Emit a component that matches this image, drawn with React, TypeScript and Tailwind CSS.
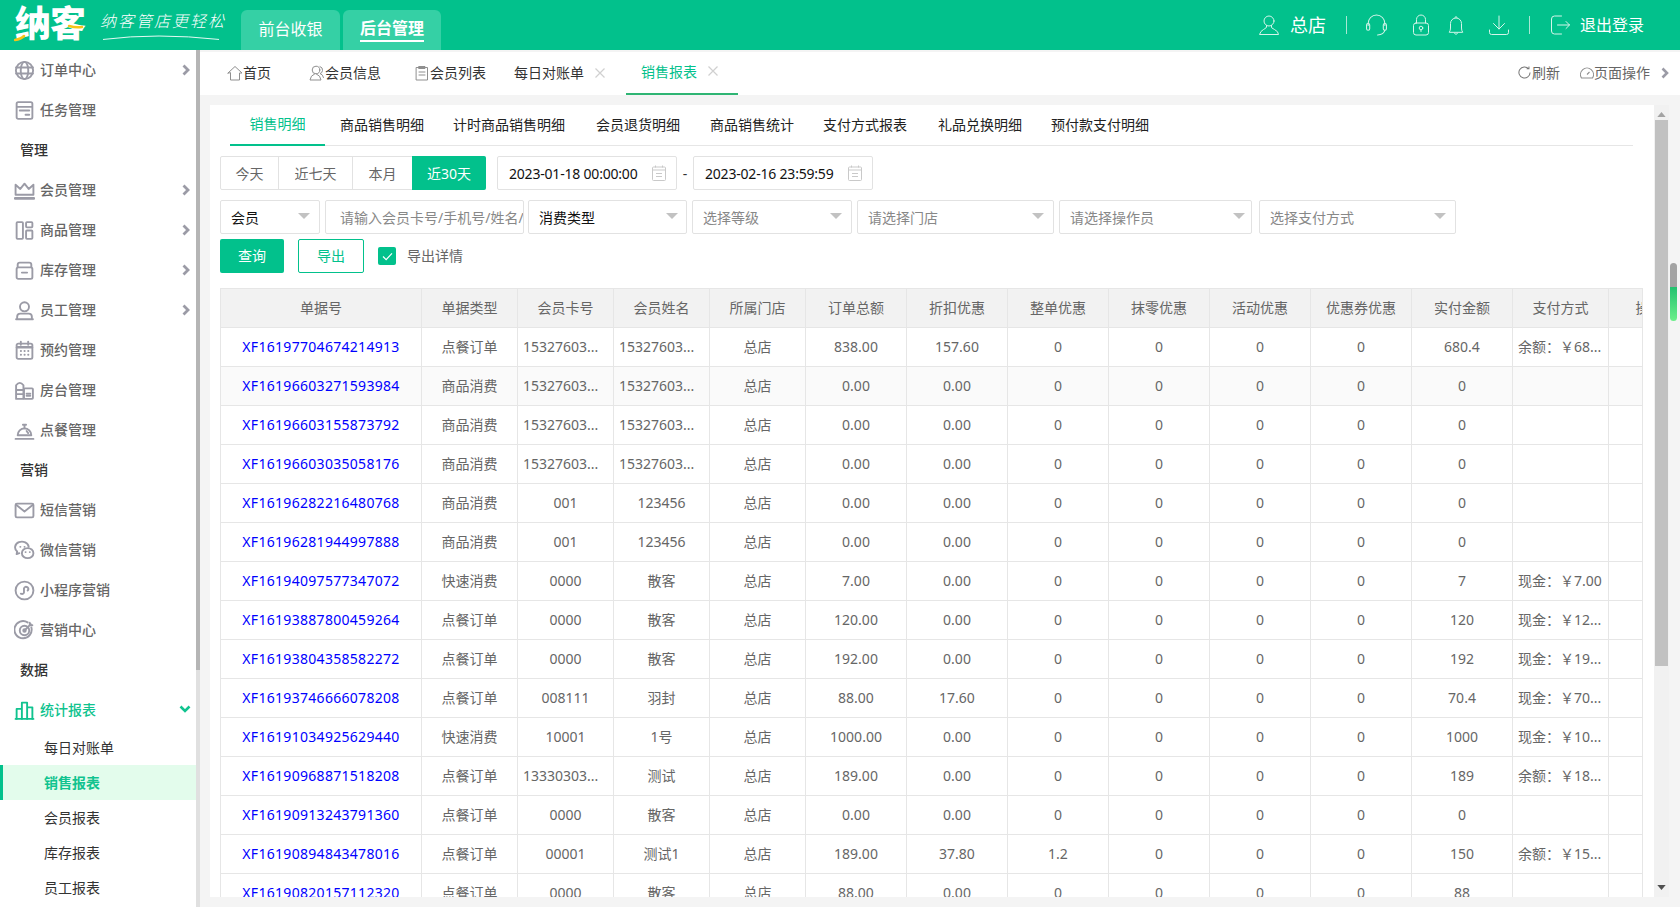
import React from "react";

type IconProps = { children: React.ReactNode; className?: string; box?: string };
const Svg = ({ children, className = "w-5 h-5", box = "0 0 20 20" }: IconProps) => (
  <svg viewBox={box} fill="none" stroke="currentColor" strokeWidth={1.8} strokeLinecap="round" strokeLinejoin="round" className={className}>
    {children}
  </svg>
);

const menuIcons: Record<string, React.ReactNode> = {
  globe: (<><circle cx="10" cy="10" r="8.200" /><ellipse cx="10" cy="10" rx="3.600" ry="8.200" /><path d="M2 7.200h16M2 12.800h16" /></>),
  task: (<><rect x="2.500" y="2" width="15" height="16" rx="1.500" /><path d="M3 6.500h14M5.500 10h9M11 14h3.500" /></>),
  crown: (<><path d="M1.500 14V4.500l4.500 4 4-5 4 5 4.500-4V14z" /><path d="M1 17.500h18" strokeWidth={2.400} /></>),
  goods: (<><rect x="2.500" y="2" width="6" height="16" rx=".8" /><rect x="11.500" y="2" width="6" height="5" rx=".8" /><rect x="11.500" y="10" width="6" height="8" rx=".8" /></>),
  stock: (<><path d="M3.500 7V4.500Q3.500 2.500 5.500 2.500h9Q16.500 2.500 16.500 4.500V7" /><rect x="2.500" y="7" width="15" height="11" rx="1.500" /><path d="M7.500 12h5" /></>),
  staff: (<><circle cx="10" cy="6.500" r="4.300" /><path d="M3 17.500v-1.500q0-3 3-3h8q3 0 3 3v1.500" /><path d="M2 18.300h16" /></>),
  cal: (<><rect x="2.500" y="3.500" width="15" height="14.500" rx="1.500" /><path d="M3 7h14" strokeWidth={2.400} /><path d="M6.500 1.500v3M13.500 1.500v3M6.500 10.500h.2M10 10.500h.2M13.500 10.500h.2M6.500 14h.2M10 14h.2M13.500 14h.2" /></>),
  room: (<><path d="M2 18V5q3.500-4.500 7 0v13z" /><path d="M2.500 9.500h6.500M2.500 13.500h6.500" /><rect x="9.500" y="8" width="8.500" height="10" rx=".8" /><path d="M12 13h3.500M12 15h3.500" /></>),
  bell: (<><path d="M3.500 14.500a6.500 6.500 0 0 1 13 0z" /><path d="M10 8V5.500M8.500 4.500 11.500 4.500M12 10.500l1.500 2M1.500 18h17" /></>),
  mail: (<><rect x="1.500" y="3.500" width="17" height="13" rx="1.300" /><path d="m2 4.500 8 6.500 8-6.500" /></>),
  wechat: (<><path d="M14 6.500A6.500 5.500 0 1 0 3 11l-.500 2.500L5 12.500" /><ellipse cx="13" cy="12.500" rx="5.500" ry="4.800" /><path d="M6 6.500h.1M10 6.500h.1M11 11.500h.1M15 11.500h.1" /></>),
  mini: (<><circle cx="10" cy="10" r="8.500" /><path d="M6.500 13q2 1 3-1V8q1-2.500 3.500-1 1.500 1.500 0 3" /></>),
  target: (<><path d="M16.500 7A8.200 8.200 0 1 1 13 2.300" /><circle cx="10" cy="10" r="4.500" /><circle cx="10" cy="10" r="1.200" /><path d="m10 10 6-6M15 2.500V5h2.500" /></>),
  chart: (<><path d="M1.500 18h17" /><path d="M2.500 18V8.500h5V18M7.500 18V2.500h5V18M12.500 18V7h5v11" /></>),
};

type MenuItem = { kind: "item"; icon: string; label: string; arrow?: boolean; active?: boolean } | { kind: "head"; label: string };
const menu: MenuItem[] = [
  { kind: "item", icon: "globe", label: "订单中心", arrow: true },
  { kind: "item", icon: "task", label: "任务管理" },
  { kind: "head", label: "管理" },
  { kind: "item", icon: "crown", label: "会员管理", arrow: true },
  { kind: "item", icon: "goods", label: "商品管理", arrow: true },
  { kind: "item", icon: "stock", label: "库存管理", arrow: true },
  { kind: "item", icon: "staff", label: "员工管理", arrow: true },
  { kind: "item", icon: "cal", label: "预约管理" },
  { kind: "item", icon: "room", label: "房台管理" },
  { kind: "item", icon: "bell", label: "点餐管理" },
  { kind: "head", label: "营销" },
  { kind: "item", icon: "mail", label: "短信营销" },
  { kind: "item", icon: "wechat", label: "微信营销" },
  { kind: "item", icon: "mini", label: "小程序营销" },
  { kind: "item", icon: "target", label: "营销中心" },
  { kind: "head", label: "数据" },
  { kind: "item", icon: "chart", label: "统计报表", active: true },
];

const Sidebar = () => (
  <aside className="w-[200px] flex-none flex bg-white h-full overflow-hidden">
    <div className="w-[196px] flex-none text-[14px]">
      {menu.map((m) =>
        m.kind === "head" ? (
          <div key={m.label} className="h-[40px] pl-[20px] pb-[2px] flex items-center text-[#333] font-medium">{m.label}</div>
        ) : (
          <div key={m.label} className={`h-[40px] flex items-center pl-[14px] font-medium ${m.active ? "text-[#10c38f] font-bold" : "text-[#666]"}`}>
            <span className={m.active ? "text-[#10c38f]" : "text-[#9b9ba6]"}><Svg className="w-[21px] h-[21px] block">{menuIcons[m.icon]}</Svg></span>
            <span className="ml-[5px] flex-1 mb-[2px]">{m.label}</span>
            {m.arrow && (
              <svg viewBox="0 0 8 12" className="w-[8px] h-[12px] mr-[6px] text-[#9b9ba6]" fill="none" stroke="currentColor" strokeWidth={2.800}><path d="m1.500 1.500 4.500 4.500-4.500 4.500" /></svg>
            )}
            {m.active && (
              <svg viewBox="0 0 12 8" className="w-[12px] h-[8px] mr-[5px] mb-[2px] text-[#10c38f]" fill="none" stroke="currentColor" strokeWidth={2.600}><path d="m1.500 1.500 4.500 4.500 4.500-4.500" /></svg>
            )}
          </div>
        )
      )}
      <div className="h-[35px] pl-[44px] flex items-center text-[#333]">每日对账单</div>
      <div className="h-[35px] pl-[41px] flex items-center bg-[#e3fcec] border-l-[3px] border-[#02c18c] text-[#10c38f] font-bold">销售报表</div>
      <div className="h-[35px] pl-[44px] flex items-center text-[#333]">会员报表</div>
      <div className="h-[35px] pl-[44px] flex items-center text-[#333]">库存报表</div>
      <div className="h-[35px] pl-[44px] flex items-center text-[#333]">员工报表</div>
    </div>
    <div className="w-[4px] flex-none bg-[#e0e0e0]">
      <div className="h-[620px] bg-[#b5b5b5]" />
    </div>
  </aside>
);

const TopIcon = ({ children, className }: { children: React.ReactNode; className: string }) => (
  <svg viewBox="0 0 22 22" fill="none" stroke="currentColor" strokeWidth={1} strokeLinecap="round" strokeLinejoin="round" className={`text-[#d5f5ea] flex-none ${className}`}>
    {children}
  </svg>
);

const TopBar = () => (
  <header className="h-[50px] flex-none bg-[#02c18c] flex text-white">
    <div className="w-[241px] flex-none relative flex items-start">
      <div className="ml-[15px] mt-[4px] text-[36px] leading-[40px] font-black tracking-[-1px] w-[72px] whitespace-nowrap">纳客</div>
      <svg viewBox="0 0 72 30" className="absolute left-[14px] top-[12px] w-[72px] h-[30px]" fill="none">
        <path d="M1 28q6-1 9-4" stroke="#f5c518" strokeWidth={2.500} strokeLinecap="round" />
        <path d="M55 14q7 2 13 1" stroke="#f5c518" strokeWidth={2.500} strokeLinecap="round" />
      </svg>
      <div className="ml-[13px] mt-[10px] text-[16px] leading-[22px] italic font-light tracking-[2px] whitespace-nowrap">纳客管店更轻松</div>
      <svg viewBox="0 0 120 6" className="absolute left-[103px] top-[34px] w-[118px] h-[7px]" fill="none">
        <path d="M0 5Q55-2 118 5" stroke="#e8fbf5" strokeWidth={1} />
      </svg>
    </div>
    <div className="flex items-end gap-[3px]">
      <div className="w-[99px] h-[40px] rounded-t-[6px] bg-[#35d0a5] text-[16px] flex items-center justify-center pb-[3px]">前台收银</div>
      <div className="w-[98px] h-[40px] rounded-t-[6px] bg-[#35d0a5] text-[16px] font-bold flex items-center justify-center pb-[3px]">
        <span className="border-b-2 border-white leading-[24px] inline-block">后台管理</span>
      </div>
    </div>
    <div className="flex-1" />
    <div className="flex items-center pr-[36px]">
      <TopIcon className="w-[22px] h-[22px]"><circle cx="11" cy="7" r="5" /><path d="M8.500 11.500v1.500q0 1-3 2.500T1.500 20.500h19q0-3-4-5t-3-2.500v-1.500" /></TopIcon>
      <span className="ml-[10px] text-[18px] leading-[24px]">总店</span>
      <span className="ml-[20px] w-px h-[18px] bg-[#a8e8d4]" />
      <TopIcon className="ml-[18px] w-[23px] h-[23px]"><path d="M3 11V9a8 8 0 0 1 16 0v2" /><rect x="1.500" y="9" width="3" height="6.500" rx="1.500" /><rect x="17.500" y="9" width="3" height="6.500" rx="1.500" /><path d="M19 15.500q-1 4.500-7 4.500" /></TopIcon>
      <TopIcon className="ml-[22px] w-[22px] h-[22px]"><rect x="3.500" y="9" width="15" height="12" rx="2.500" /><path d="M6.500 9V5.500a4.500 4.500 0 0 1 9 0V9" /><circle cx="11" cy="14" r="1.800" /><path d="M11 16v1.500" /></TopIcon>
      <TopIcon className="ml-[13px] w-[22px] h-[22px]"><path d="M4.500 18q1-1.500 1-4V9.500a5.500 5.500 0 0 1 11 0V14q0 2.500 1 4z" /><path d="M10 3.500q1-2.500 2 0M9.500 19.500q1.500 2 3 0" /></TopIcon>
      <TopIcon className="ml-[21px] w-[22px] h-[22px]"><path d="M11 2v13M5.500 9.500 11 15l5.500-5.500M1.500 16v2.500q0 2 2 2h15q2 0 2-2V16" /></TopIcon>
      <span className="ml-[19px] w-px h-[18px] bg-[#a8e8d4]" />
      <TopIcon className="ml-[19px] w-[22px] h-[22px]"><path d="M12.500 2h-7Q2.500 2 2.500 5v12q0 3 3 3h7" /><path d="M8.500 11h12M17 7.500l3.500 3.500-3.500 3.500" /></TopIcon>
      <span className="ml-[9px] text-[16px] leading-[24px]">退出登录</span>
    </div>
  </header>
);

const X = () => (
  <svg viewBox="0 0 10 10" className="w-[10px] h-[10px] ml-[11px]" stroke="#d0d0d0" strokeWidth={1.200}><path d="m.5.500 9 9M9.500.500l-9 9" /></svg>
);
const TI = ({ children }: { children: React.ReactNode }) => (
  <svg viewBox="0 0 16 16" className="w-[16px] h-[16px] flex-none text-[#8f8f8f]" fill="none" stroke="currentColor" strokeWidth={1} strokeLinejoin="round" strokeLinecap="round">{children}</svg>
);

const TabsBar = () => (
  <div className="h-[43px] mt-[2px] flex-none bg-white flex items-center text-[14px] text-[#333] pl-[27px]">
    <div className="flex items-center w-[84px] pb-[2px]"><TI><path d="M1 8 8 1.500 15 8h-2.500v7h-9V8z" /></TI><span>首页</span></div>
    <div className="flex items-center w-[104px] ml-[-2px] pb-[2px]"><TI><circle cx="7" cy="5" r="3.800" /><path d="M5.500 9q-4 1.500-4.500 6h11q-.500-4.500-4.500-6M11 1.500q3 1 2.500 4T11 8.500q3 1 3.500 4" /></TI><span>会员信息</span></div>
    <div className="flex items-center w-[101px] ml-[1px] pb-[2px]"><TI><rect x="2.500" y="2.500" width="11" height="12.500" /><path d="M5 1.500h6v2H5zM5 7h6M5 10h6" /></TI><span>会员列表</span></div>
    <div className="flex items-center w-[112px] ml-[-1px] pb-[2px]"><span>每日对账单</span><X /></div>
    <div className="w-[112px] h-[43px] border-b-2 border-[#2fb574] flex items-center pl-[15px] pb-[3px] text-[#02c18c] whitespace-nowrap">销售报表<X /></div>
    <div className="flex-1" />
    <div className="flex items-center text-[#666] pb-[2px]">
      <svg viewBox="0 0 14 14" className="w-[13px] h-[13px] mr-[1px] text-[#777]" fill="none" stroke="currentColor" strokeWidth={1.100}><path d="M11.500 3A6 6 0 1 0 13 7M11.800 .500V3H9.300" /></svg>
      <span>刷新</span>
      <svg viewBox="0 0 14 14" className="w-[14px] h-[14px] ml-[20px] text-[#8f8f8f]" fill="none" stroke="currentColor" strokeWidth={1.100}><path d="M1.500 12a6.500 6.500 0 1 1 11 0zM7 8.500 9.500 6" /></svg>
      <span>页面操作</span>
      <svg viewBox="0 0 8 12" className="w-[8px] h-[12px] ml-[11px] mr-[11px] text-[#9b9ba6]" fill="none" stroke="currentColor" strokeWidth={2.600}><path d="m1.500 1.500 4.500 4.500-4.500 4.500" /></svg>
    </div>
  </div>
);

const SubTabs = () => {
  const items: [string, string][] = [
    ["商品销售明细", "ml-[15px]"],
    ["计时商品销售明细", "ml-[29px]"],
    ["会员退货明细", "ml-[31px]"],
    ["商品销售统计", "ml-[30px]"],
    ["支付方式报表", "ml-[29px]"],
    ["礼品兑换明细", "ml-[31px]"],
    ["预付款支付明细", "ml-[29px]"],
  ];
  return (
    <div className="h-[41px] ml-[10px] mr-[21px] border-b border-[#e6e6e6] flex text-[14px] text-[#222] flex-none">
      <div className="w-[95px] h-[41px] border-b-2 border-[#02c18c] flex items-center justify-center pb-[2px] text-[#02c18c]">销售明细</div>
      {items.map(([t, c]) => (
        <div key={t} className={`h-[40px] flex items-center pb-[2px] whitespace-nowrap ${c}`}>{t}</div>
      ))}
    </div>
  );
};

const Cal = () => (
  <svg viewBox="0 0 14 16" className="w-[14px] h-[16px] text-[#c9c9c9] flex-none" fill="none" stroke="currentColor" strokeWidth={1}><rect x=".5" y="2" width="13" height="13.500" rx="1" /><path d="M1 5h12M3.500.5v2M10.500.5v2M4 8.500h6M4 11.500h6" /></svg>
);

const Select = ({ w, label, dark, extra, pr = "pr-[9px]" }: { w: string; label: string; dark?: boolean; extra: string; pr?: string }) => (
  <div className={`h-[34px] flex-none border border-[#e2e2e2] rounded-[2px] flex items-center pl-[10px] ${pr} ${w} ${extra} ${dark ? "text-[#111]" : "text-[#888]"}`}>
    <span className="flex-1 whitespace-nowrap">{label}</span>
    <svg viewBox="0 0 12 6" className="w-[12px] h-[6px] flex-none mb-[2px]"><path d="M0 0h12L6 6z" fill="#c2c2c2" /></svg>
  </div>
);

const FilterArea = () => (
  <div className="text-[14px] flex-none">
    <div className="flex mt-[10px] h-[34px]">
      <div className="flex border border-[#e2e2e2] rounded-[2px] text-[#666] h-[34px] w-[266px]">
        <div className="w-[58px] border-r border-[#e2e2e2] flex items-center justify-center">今天</div>
        <div className="w-[74px] border-r border-[#e2e2e2] flex items-center justify-center">近七天</div>
        <div className="w-[59px] flex items-center justify-center">本月</div>
        <div className="flex-1 mt-[-1px] mb-[-1px] mr-[-1px] bg-[#02c18c] text-white rounded-r-[2px] flex items-center justify-center">近30天</div>
      </div>
      <div className="ml-[11px] w-[180px] border border-[#e2e2e2] rounded-[2px] flex items-center pl-[11px] pr-[10px] text-[#111]">
        <span className="flex-1 whitespace-nowrap tracking-[-0.2px]">2023-01-18 00:00:00</span><Cal />
      </div>
      <div className="w-[16px] flex items-center justify-center text-[#333]">-</div>
      <div className="w-[180px] border border-[#e2e2e2] rounded-[2px] flex items-center pl-[11px] pr-[10px] text-[#111]">
        <span className="flex-1 whitespace-nowrap tracking-[-0.2px]">2023-02-16 23:59:59</span><Cal />
      </div>
    </div>
    <div className="flex mt-[10px]">
      <Select w="w-[100px]" label="会员" dark extra="" />
      <div className="ml-[5px] w-[199px] h-[34px] flex-none border border-[#e2e2e2] rounded-[2px] flex items-center pl-[14px] text-[#888] overflow-hidden whitespace-nowrap">请输入会员卡号/手机号/姓名/</div>
      <Select w="w-[159px]" label="消费类型" dark extra="ml-[4px]" pr="pr-[8px]" />
      <Select w="w-[160px]" label="选择等级" extra="ml-[5px]" />
      <Select w="w-[197px]" label="请选择门店" extra="ml-[5px]" />
      <Select w="w-[193px]" label="请选择操作员" extra="ml-[5px]" pr="pr-[6px]" />
      <Select w="w-[197px]" label="选择支付方式" extra="ml-[7px]" />
    </div>
    <div className="flex mt-[5px] h-[34px] items-center">
      <div className="w-[64px] h-[34px] rounded-[2px] bg-[#02c18c] text-white flex items-center justify-center pb-[2px]">查询</div>
      <div className="ml-[14px] w-[66px] h-[34px] rounded-[2px] border border-[#02c18c] text-[#02c18c] flex items-center justify-center pb-[1px]">导出</div>
      <div className="ml-[14px] w-[18px] h-[18px] rounded-[2px] bg-[#02c18c] flex items-center justify-center">
        <svg viewBox="0 0 12 10" className="w-[11px] h-[9px]" fill="none" stroke="#fff" strokeWidth={1.300}><path d="m1 5 3.500 3.500L11 1.500" /></svg>
      </div>
      <span className="ml-[11px] mb-[2px] text-[#666]">导出详情</span>
    </div>
  </div>
);

const widths = [201, 96, 96, 96, 96, 101, 101, 101, 101, 101, 101, 101, 96, 96];
const heads = ["单据号", "单据类型", "会员卡号", "会员姓名", "所属门店", "订单总额", "折扣优惠", "整单优惠", "抹零优惠", "活动优惠", "优惠券优惠", "实付金额", "支付方式", "操作员"];
const C1 = "15327603...";
const rows: string[][] = [
  ["XF16197704674214913", "点餐订单", C1, C1, "838.00", "157.60", "0", "680.4", "余额：￥68..."],
  ["XF16196603271593984", "商品消费", C1, C1, "0.00", "0.00", "0", "0", ""],
  ["XF16196603155873792", "商品消费", C1, C1, "0.00", "0.00", "0", "0", ""],
  ["XF16196603035058176", "商品消费", C1, C1, "0.00", "0.00", "0", "0", ""],
  ["XF16196282216480768", "商品消费", "001", "123456", "0.00", "0.00", "0", "0", ""],
  ["XF16196281944997888", "商品消费", "001", "123456", "0.00", "0.00", "0", "0", ""],
  ["XF16194097577347072", "快速消费", "0000", "散客", "7.00", "0.00", "0", "7", "现金：￥7.00"],
  ["XF16193887800459264", "点餐订单", "0000", "散客", "120.00", "0.00", "0", "120", "现金：￥12..."],
  ["XF16193804358582272", "点餐订单", "0000", "散客", "192.00", "0.00", "0", "192", "现金：￥19..."],
  ["XF16193746666078208", "点餐订单", "008111", "羽封", "88.00", "17.60", "0", "70.4", "现金：￥70..."],
  ["XF16191034925629440", "快速消费", "10001", "1号", "1000.00", "0.00", "0", "1000", "现金：￥10..."],
  ["XF16190968871518208", "点餐订单", "13330303...", "测试", "189.00", "0.00", "0", "189", "余额：￥18..."],
  ["XF16190913243791360", "点餐订单", "0000", "散客", "0.00", "0.00", "0", "0", ""],
  ["XF16190894843478016", "点餐订单", "00001", "测试1", "189.00", "37.80", "1.2", "150", "余额：￥15..."],
  ["XF16190820157112320", "点餐订单", "0000", "散客", "88.00", "0.00", "0", "88", ""],
];

const cell = "border border-[#e6e6e6] text-center p-0 pb-[2px] whitespace-nowrap";
const cutCell = "border border-[#e6e6e6] text-left p-0 pl-[5px] pb-[2px] whitespace-nowrap";

const DataTable = () => (
  <div className="mt-[15px] flex-none w-[1423px] overflow-hidden border-r border-[#e6e6e6]">
    <table className="table-fixed border-collapse w-[1484px] text-[14px] text-[#666]">
      <colgroup>
        {widths.map((w, i) => (
          <col key={i} style={{ width: w }} />
        ))}
      </colgroup>
      <thead>
        <tr className="h-[39px] bg-[#f2f2f2]">
          {heads.map((h) => (
            <th key={h} className={`${cell} font-normal`}>{h}</th>
          ))}
        </tr>
      </thead>
      <tbody>
        {rows.map((r, i) => (
          <tr key={r[0]} className={`h-[39px] ${i === 1 ? "bg-[#fafafa]" : ""}`}>
            <td className={`${cell} text-[#0000ff] tracking-[0.3px]`}>{r[0]}</td>
            <td className={cell}>{r[1]}</td>
            <td className={r[2].endsWith("...") ? cutCell : cell}>{r[2]}</td>
            <td className={r[3].endsWith("...") ? cutCell : cell}>{r[3]}</td>
            <td className={cell}>总店</td>
            <td className={cell}>{r[4]}</td>
            <td className={cell}>{r[5]}</td>
            <td className={cell}>{r[6]}</td>
            <td className={cell}>0</td>
            <td className={cell}>0</td>
            <td className={cell}>0</td>
            <td className={cell}>{r[7]}</td>
            <td className={`${cutCell} overflow-hidden`}>{r[8]}</td>
            <td className={cell} />
          </tr>
        ))}
      </tbody>
    </table>
  </div>
);

export default function App() {
  return (
    <div className="w-full h-screen flex flex-col overflow-hidden bg-[#f4f4f4] [font-family:'Noto_Sans','Noto_Sans_CJK_SC',sans-serif]">
      <TopBar />
      <div className="flex-1 flex min-h-0">
        <Sidebar />
        <main className="flex-1 min-w-0 flex flex-col relative">
          <TabsBar />
          <div className="flex-1 min-h-0 flex mt-[10px] mb-[10px] ml-[10px] mr-[11px]">
            <div className="flex-1 min-w-0 bg-white pl-[10px] flex flex-col overflow-hidden">
              <SubTabs />
              <FilterArea />
              <DataTable />
            </div>
            <div className="w-[15px] flex-none bg-[#f1f1f1] flex flex-col items-center">
              <svg viewBox="0 0 10 6" className="w-[9px] h-[5px] mt-[7px] mb-[3px]"><path d="M5 0l5 6H0z" fill="#a3a3a3" /></svg>
              <div className="w-[13px] h-[546px] bg-[#c1c1c1]" />
              <div className="flex-1" />
              <svg viewBox="0 0 10 6" className="w-[9px] h-[5px] mb-[7px]"><path d="M5 6 0 0h10z" fill="#505050" /></svg>
            </div>
          </div>
          <div className="absolute right-[3px] top-[213px] w-[7px] h-[58px] rounded-full bg-[linear-gradient(#a3a3a3_0,#a3a3a3_41%,#22c16f_41%,#6cef8a_100%)]" />
        </main>
      </div>
    </div>
  );
}
